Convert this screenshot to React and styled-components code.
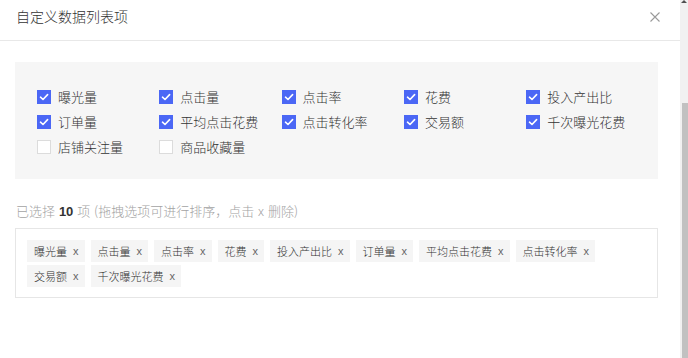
import React from "react";
import styled, { createGlobalStyle } from "styled-components";

const GlobalStyle = createGlobalStyle`
  html, body {
    margin: 0;
    padding: 0;
    background: #ffffff;
  }
  body {
    font-family: "Noto Sans CJK SC", "Noto Sans", sans-serif;
    font-weight: 300;
    color: #333;
  }
  * {
    box-sizing: border-box;
  }
`;

const options = [
  { label: "曝光量", checked: true },
  { label: "点击量", checked: true },
  { label: "点击率", checked: true },
  { label: "花费", checked: true },
  { label: "投入产出比", checked: true },
  { label: "订单量", checked: true },
  { label: "平均点击花费", checked: true },
  { label: "点击转化率", checked: true },
  { label: "交易额", checked: true },
  { label: "千次曝光花费", checked: true },
  { label: "店铺关注量", checked: false },
  { label: "商品收藏量", checked: false },
];

const selected = options.filter((o) => o.checked).map((o) => o.label);

const Check = ({ checked }) => (
  <Box checked={checked}>
    {checked && (
      <svg width="10" height="8" viewBox="0 0 10 8">
        <path
          d="M1.5 4.2 L4 6.5 L8.6 1.6"
          fill="none"
          stroke="#fff"
          strokeWidth="1.6"
          strokeLinecap="round"
          strokeLinejoin="round"
        />
      </svg>
    )}
  </Box>
);

const App = () => {
  return (
    <Page>
      <GlobalStyle />
      <Main>
        <Header>
          <Title>自定义数据列表项</Title>
          <Close>
            <svg width="10" height="10" viewBox="0 0 10 10">
              <path d="M0.5 0.5 L9.5 9.5 M9.5 0.5 L0.5 9.5" stroke="#9a9a9a" strokeWidth="1.1" />
            </svg>
          </Close>
        </Header>
        <Body>
          <Panel>
            {options.map((o) => (
              <Option key={o.label}>
                <Check checked={o.checked} />
                <span>{o.label}</span>
              </Option>
            ))}
          </Panel>
          <Summary>
            已选择 <b>10</b> 项 (拖拽选项可进行排序，点击 x 删除)
          </Summary>
          <TagBox>
            {selected.map((s) => (
              <Tag key={s}>
                {s}
                <Remove>x</Remove>
              </Tag>
            ))}
          </TagBox>
        </Body>
      </Main>
      <Scrollbar>
        <Arrow />
        <Thumb />
      </Scrollbar>
    </Page>
  );
};

const Page = styled.div`
  display: flex;
  width: 688px;
  height: 358px;
  overflow: hidden;
  background: #fff;
`;

const Main = styled.div`
  flex: 1;
  display: flex;
  flex-direction: column;
`;

const Header = styled.div`
  height: 41px;
  display: flex;
  justify-content: space-between;
  align-items: flex-start;
  padding: 8px 20px 0 16px;
  border-bottom: 1px solid #e8e8e8;
`;

const Title = styled.div`
  font-size: 14px;
  line-height: 16px;
  color: #333;
`;

const Close = styled.div`
  display: flex;
  margin-top: 4px;
`;

const Body = styled.div`
  padding: 21px 22px 0 15px;
  display: flex;
  flex-direction: column;
`;

const Panel = styled.div`
  background: #f6f6f6;
  height: 117px;
  padding: 28px 0 0 22px;
  display: grid;
  grid-template-columns: repeat(5, 122.3px);
  grid-auto-rows: 14px;
  row-gap: 11px;
`;

const Option = styled.label`
  display: flex;
  align-items: center;
  gap: 7px;
  font-size: 13px;
  line-height: 14px;
  color: #333;
  white-space: nowrap;
`;

const Box = styled.span`
  width: 14px;
  height: 14px;
  display: flex;
  align-items: center;
  justify-content: center;
  background: ${(p) => (p.checked ? "#4b67f5" : "#fff")};
  border: 1px solid ${(p) => (p.checked ? "#4b67f5" : "#dcdcdc")};
  flex-shrink: 0;
`;

const Summary = styled.div`
  margin-top: 24px;
  padding-left: 1px;
  font-size: 13px;
  line-height: 16px;
  color: #a3a3a3;
  word-spacing: 1px;
  b {
    color: #333;
    font-weight: 700;
    font-family: "Liberation Sans", "Noto Sans", sans-serif;
  }
`;

const TagBox = styled.div`
  margin-top: 8px;
  height: 70px;
  border: 1px solid #e6e6e6;
  padding: 11px 11px 0;
  display: flex;
  flex-wrap: wrap;
  align-content: flex-start;
  gap: 3px 6px;
`;

const Tag = styled.div`
  height: 22px;
  display: flex;
  align-items: center;
  padding: 0 6px 0 7px;
  background: #f5f5f5;
  font-size: 11px;
  line-height: 22px;
  color: #333;
  white-space: nowrap;
`;

const Remove = styled.span`
  margin-left: 6px;
  font-family: "Liberation Sans", sans-serif;
  font-size: 11px;
  color: #666;
`;

const Scrollbar = styled.div`
  width: 8px;
  background: #f1f1f1;
  display: flex;
  flex-direction: column;
  align-items: flex-end;
`;

const Arrow = styled.div`
  width: 0;
  height: 0;
  margin: 0 1px 0 0;
  border-left: 3px solid transparent;
  border-right: 3px solid transparent;
  border-bottom: 3px solid #505050;
`;

const Thumb = styled.div`
  margin-top: 100px;
  width: 6px;
  flex: 1;
  background: #c1c1c1;
`;

export default App;
